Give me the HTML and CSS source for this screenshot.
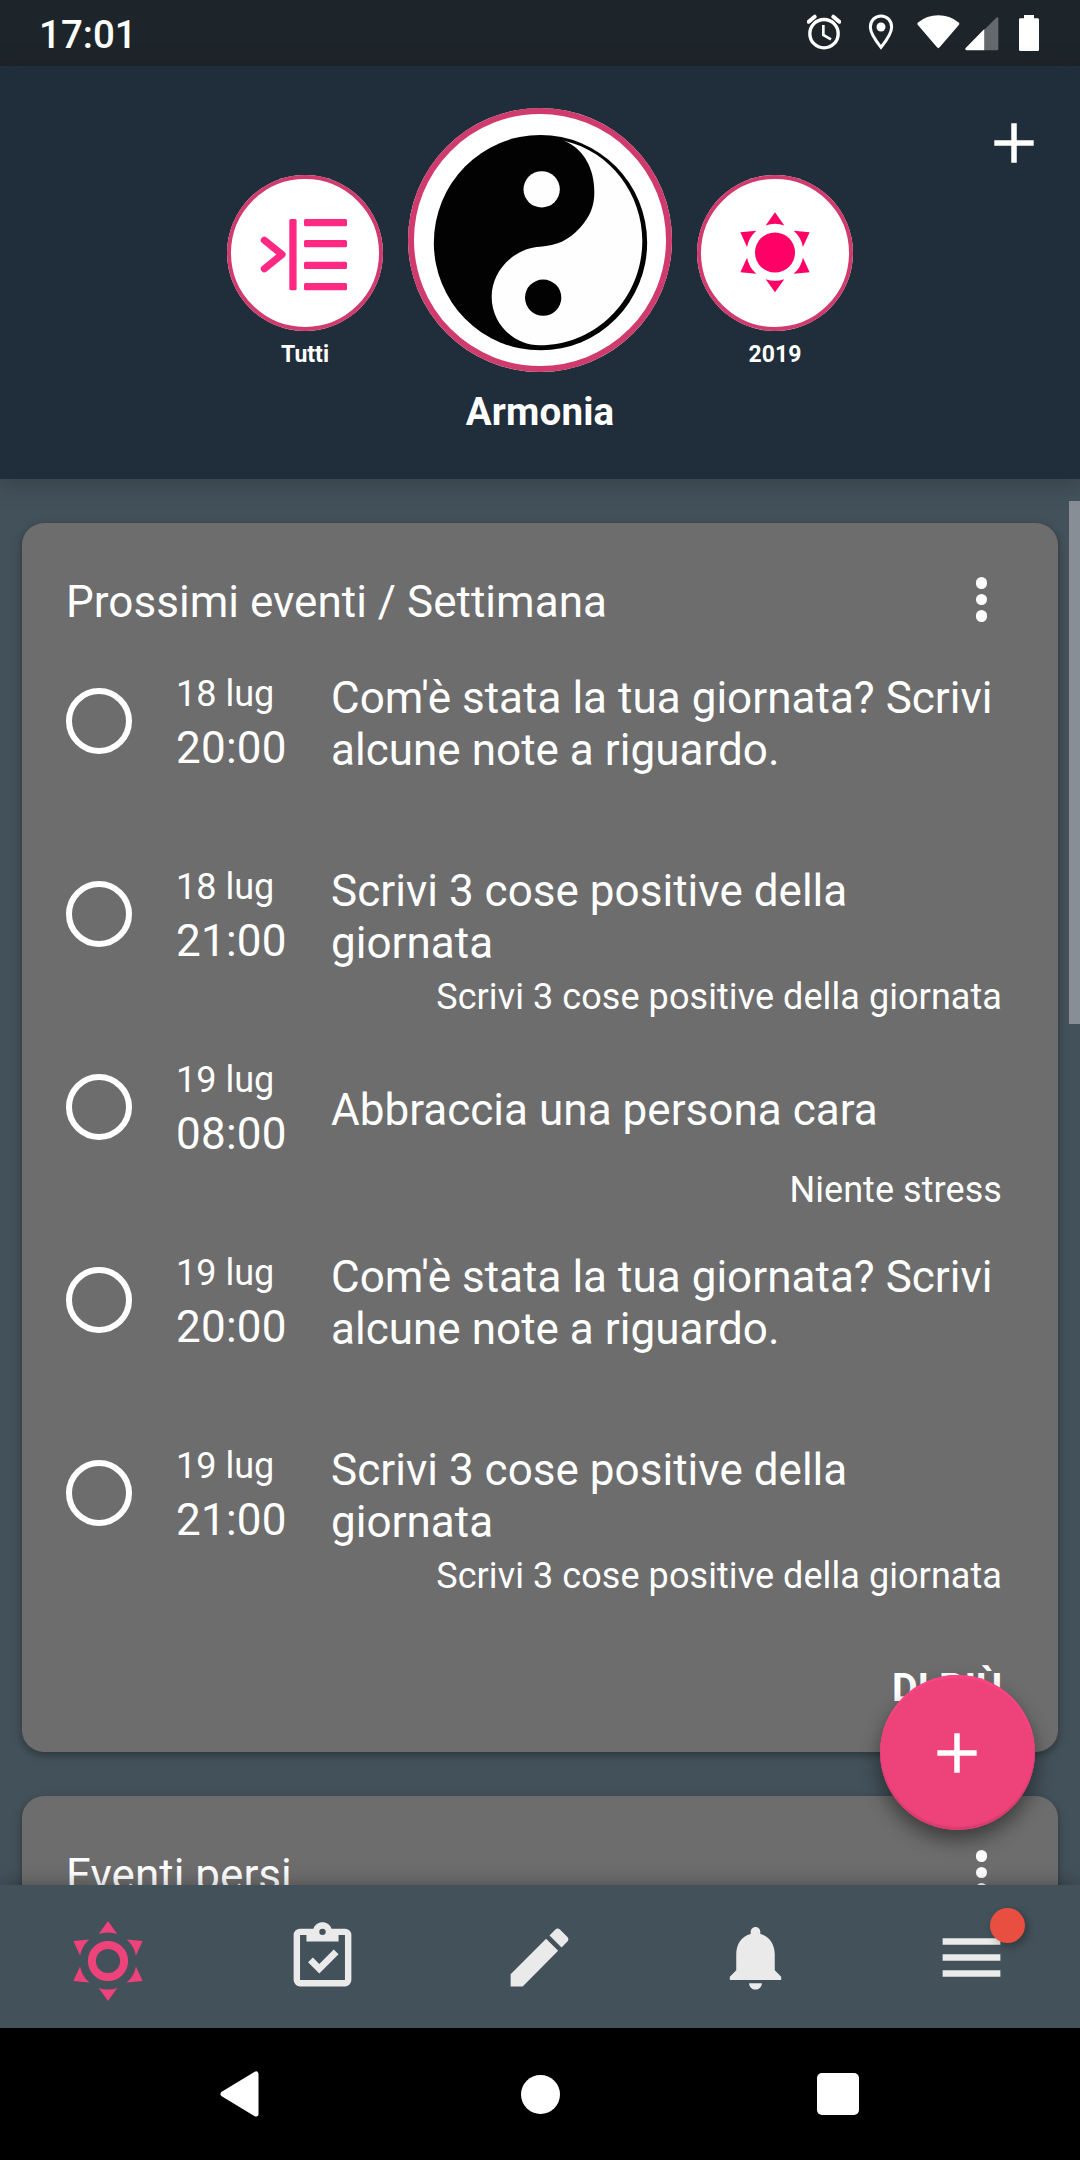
FILE: index.html
```html
<!DOCTYPE html>
<html lang="it">
<head>
    <meta charset="UTF-8">
    <meta name="viewport" content="width=device-width, initial-scale=1.0">
    <title>Armonia</title>
    <link rel="stylesheet" href="styles.css">
</head>
<body>
    <div class="app">
        <div class="status-bar">
            <span class="clock">17:01</span>
            <div class="status-icons">
                <svg class="icon-alarm" width="34" height="36" viewBox="80 43 102 108">
                    <circle cx="131" cy="102" r="42.5" fill="none" stroke="#fff" stroke-width="10"/>
                    <path d="M129 76v30l23 13" fill="none" stroke="#fff" stroke-width="8"/>
                    <path d="M85 66l18-15M177 66l-18-15" stroke="#fff" stroke-width="12" stroke-linecap="round"/>
                </svg>
                <svg class="icon-pin" width="26" height="36" viewBox="262 43 78 108">
                    <path d="M301 49c-18 0-32 14-32 33 0 20 16 41 32 61 16-20 32-41 32-61 0-19-14-33-32-33z" fill="none" stroke="#fff" stroke-width="9"/>
                    <circle cx="301" cy="82" r="13.5" fill="#fff"/>
                </svg>
                <svg class="icon-wifi" width="43" height="34" viewBox="409 45 129 102">
                    <path d="M411 68q28-22 62-22t62 22q2 3 0 6l-58 68q-4 5-8 0l-58-68q-2-3 0-6z" fill="#fff"/>
                </svg>
                <svg class="icon-signal" width="34" height="34" viewBox="554 50 102 102">
                    <path d="M612 88v62h39q3 0 3-4V54q-2-5-6-2z" fill="#63696d"/>
                    <path d="M612 86v64h-54q-5-2-2-7z" fill="#fff"/>
                </svg>
                <svg class="icon-battery" width="20" height="36" viewBox="717 45 60 108">
                    <path d="M732 45h30v10h11q4 0 4 4v90q0 4-4 4h-52q-4 0-4-4V59q0-4 4-4h11z" fill="#fff"/>
                </svg>
            </div>
        </div>

        <header class="header">
            <div class="profile profile-small">
                <div class="avatar">
                    <svg width="156" height="156" viewBox="227 175 156 156">
                        <g fill="#ff2883">
                            <rect x="289.3" y="219" width="7.3" height="71.3" rx="1.5"/>
                            <rect x="304" y="219" width="43" height="7.2" rx="1.5"/>
                            <rect x="304" y="240" width="43" height="7.2" rx="1.5"/>
                            <rect x="304" y="261.8" width="43" height="7.2" rx="1.5"/>
                            <rect x="304" y="283.1" width="43" height="7.2" rx="1.5"/>
                        </g>
                        <path d="M264.4 240.3l17.6 14.2-17.6 14.3" fill="none" stroke="#ff2883" stroke-width="7.2" stroke-linecap="round" stroke-linejoin="round"/>
                    </svg>
                </div>
                <span class="profile-name">Tutti</span>
            </div>
            <div class="profile profile-active">
                <div class="avatar">
                    <svg width="264" height="264" viewBox="54 54 792 792">
                        <ellipse cx="451.5" cy="458" rx="320" ry="323" fill="#020202"/>
                        <path d="M522 152C585 178 613 240 613 305C613 350 600 380 570 413C535 452 500 466 450 470C370 474 305 545 305 620C305 700 370 766 450 766C620 766 757 625 757 452C757 315 665 185 522 152z" fill="#fefefe"/>
                        <circle cx="455" cy="298" r="54.5" fill="#fefefe"/>
                        <circle cx="459.5" cy="623" r="54.5" fill="#020202"/>
                    </svg>
                </div>
                <span class="profile-name">Armonia</span>
            </div>
            <div class="profile profile-small">
                <div class="avatar">
                    <svg width="156" height="156" viewBox="-78 -78 156 156" fill="#ff0066">
                        <circle cy="-0.5" r="20"/>
                        <g transform="translate(0 -0.7)">
                            <path id="ray" d="M0-40L9.3-26.9A28.4 28.4 0 0 0-9.3-26.9z"/>
                            <use href="#ray" transform="rotate(60)"/>
                            <use href="#ray" transform="rotate(120)"/>
                            <use href="#ray" transform="rotate(180)"/>
                            <use href="#ray" transform="rotate(240)"/>
                            <use href="#ray" transform="rotate(300)"/>
                        </g>
                    </svg>
                </div>
                <span class="profile-name">2019</span>
            </div>
            <svg class="add-profile" width="40" height="40" viewBox="0 0 40 40">
                <path d="M20 .3v39.400M.3 20h39.400" stroke="#fff" stroke-width="5.5"/>
            </svg>
        </header>

        <main class="content">
            <section class="card">
                <div class="card-header">
                    <h2>Prossimi eventi / Settimana</h2>
                    <div class="dots"><i></i><i></i><i></i></div>
                </div>
                <ul class="events">
                    <li class="event">
                        <span class="check"></span>
                        <div class="when"><span class="date">18 lug</span><span class="time">20:00</span></div>
                        <div class="what">
                            <p class="event-title">Com'è stata la tua giornata? Scrivi alcune note a riguardo.</p>
                        </div>
                    </li>
                    <li class="event">
                        <span class="check"></span>
                        <div class="when"><span class="date">18 lug</span><span class="time">21:00</span></div>
                        <div class="what">
                            <p class="event-title">Scrivi 3 cose positive della giornata</p>
                            <p class="event-goal">Scrivi 3 cose positive della giornata</p>
                        </div>
                    </li>
                    <li class="event">
                        <span class="check"></span>
                        <div class="when"><span class="date">19 lug</span><span class="time">08:00</span></div>
                        <div class="what">
                            <p class="event-title">Abbraccia una persona cara</p>
                            <p class="event-goal">Niente stress</p>
                        </div>
                    </li>
                    <li class="event">
                        <span class="check"></span>
                        <div class="when"><span class="date">19 lug</span><span class="time">20:00</span></div>
                        <div class="what">
                            <p class="event-title">Com'è stata la tua giornata? Scrivi alcune note a riguardo.</p>
                        </div>
                    </li>
                    <li class="event">
                        <span class="check"></span>
                        <div class="when"><span class="date">19 lug</span><span class="time">21:00</span></div>
                        <div class="what">
                            <p class="event-title">Scrivi 3 cose positive della giornata</p>
                            <p class="event-goal">Scrivi 3 cose positive della giornata</p>
                        </div>
                    </li>
                </ul>
                <div class="more">DI PIÙ</div>
            </section>

            <section class="card">
                <div class="card-header">
                    <h2>Eventi persi</h2>
                    <div class="dots"><i></i><i></i><i></i></div>
                </div>
            </section>

            <div class="scrollbar"></div>
            <div class="fab">
                <svg width="40" height="40" viewBox="0 0 40 40">
                    <path d="M20 .3v39.400M.3 20h39.400" stroke="#fff" stroke-width="5.5"/>
                </svg>
            </div>
        </main>

        <nav class="tabs">
            <div class="tab tab-active">
                <svg width="80" height="80" viewBox="-40 -40 80 80">
                    <circle r="16.1" fill="none" stroke="currentColor" stroke-width="8"/>
                    <use href="#ray"/>
                    <use href="#ray" transform="rotate(60)"/>
                    <use href="#ray" transform="rotate(120)"/>
                    <use href="#ray" transform="rotate(180)"/>
                    <use href="#ray" transform="rotate(240)"/>
                    <use href="#ray" transform="rotate(300)"/>
                </svg>
            </div>
            <div class="tab">
                <svg viewBox="0 0 24 24"><path d="M19,3H14.82C14.4,1.84 13.3,1 12,1C10.7,1 9.6,1.84 9.18,3H5A2,2 0 0,0 3,5V19A2,2 0 0,0 5,21H19A2,2 0 0,0 21,19V5A2,2 0 0,0 19,3M12,3A1,1 0 0,1 13,4A1,1 0 0,1 12,5A1,1 0 0,1 11,4A1,1 0 0,1 12,3M7,7H17V5H19V19H5V5H7V7M7.5,13.5L9,12L11,14L15.5,9.5L17,11L11,17L7.5,13.5Z"/></svg>
            </div>
            <div class="tab">
                <svg viewBox="0 0 24 24"><path d="M20.71,7.04C21.1,6.65 21.1,6 20.71,5.63L18.37,3.29C18,2.9 17.35,2.9 16.96,3.29L15.12,5.12L18.87,8.87M3,17.25V21H6.75L17.81,9.93L14.06,6.18L3,17.25Z"/></svg>
            </div>
            <div class="tab">
                <svg viewBox="0 0 24 24"><path d="M12 22c1.1 0 2-.9 2-2h-4c0 1.1.89 2 2 2zm6-6v-5c0-3.07-1.64-5.64-4.5-6.32V4c0-.83-.67-1.5-1.5-1.5s-1.5.67-1.5 1.5v.68C7.63 5.36 6 7.92 6 11v5l-2 2v1h16v-1l-2-2z"/></svg>
            </div>
            <div class="tab">
                <svg viewBox="0 0 24 24"><path d="M3,6H21V8H3V6M3,11H21V13H3V11M3,16H21V18H3V16Z"/></svg>
                <span class="badge"></span>
            </div>
        </nav>

        <div class="system-bar">
            <svg class="sys-back" width="40" height="46" viewBox="0 0 40 46">
                <path d="M3 23L36 3v40z" fill="#fff" stroke="#fff" stroke-width="5" stroke-linejoin="round"/>
            </svg>
            <span class="sys-home"></span>
            <span class="sys-recent"></span>
        </div>
    </div>
</body>
</html>
```
FILE: styles.css
```css
* {
    box-sizing: border-box;
}
body {
    margin: 0;
    font-family: Roboto, sans-serif;
    color: #fff;
    background: #000;
}
h2, p, ul {
    margin: 0;
    padding: 0;
    font-weight: 400;
}
svg {
    display: block;
    flex: none;
}
.app {
    width: 1080px;
    height: 2160px;
    display: flex;
    flex-direction: column;
    overflow: hidden;
}

/* status bar */
.status-bar {
    height: 66px;
    flex: none;
    display: flex;
    justify-content: space-between;
    background: #1e252a;
    padding: 0 41px 0 39px;
}
.clock {
    font-size: 38.5px;
    font-weight: 500;
    line-height: 45px;
    margin-top: 12px;
}
.status-icons {
    display: flex;
    padding-top: 14px;
}
.icon-pin {
    margin-left: 27px;
}
.icon-wifi {
    margin: 1px 5px 0 23px;
}
.icon-signal {
    margin-top: 3px;
}
.icon-battery {
    margin: 1px 0 0 20px;
}

/* header */
.header {
    height: 413px;
    flex: none;
    display: flex;
    justify-content: center;
    gap: 25px;
    background: #202d3a;
    padding-top: 42px;
    position: relative;
    z-index: 2;
    box-shadow: 0 4px 24px rgba(0, 0, 0, 0.22);
}
.profile {
    display: flex;
    flex-direction: column;
    align-items: center;
    font-weight: 700;
}
.avatar {
    border-radius: 50%;
    background: #fff;
    position: relative;
}
.avatar::after {
    content: "";
    position: absolute;
    inset: 0;
    border-radius: 50%;
    border: 4px solid #d03b6d;
}
.profile-active .avatar::after {
    border-width: 6px;
}
.profile-small {
    padding-top: 67px;
}
.profile-small .profile-name {
    font-size: 23px;
    line-height: 27px;
    margin-top: 10px;
}
.profile-active .profile-name {
    font-size: 38.5px;
    line-height: 45px;
    margin-top: 17px;
    letter-spacing: 0.15px;
}
.add-profile {
    position: absolute;
    top: 57px;
    right: 46px;
}

/* content */
.content {
    height: 1406px;
    flex: none;
    position: relative;
    overflow: hidden;
    background: #43515a;
    padding: 44px 22px 0;
}
.card {
    background: #6d6d6d;
    border-radius: 22px;
    padding: 53px 56px 42px 44px;
    margin-bottom: 44px;
    box-shadow: 0 3px 8px rgba(0, 0, 0, 0.35);
}
.card-header {
    display: flex;
    justify-content: space-between;
}
.card-header h2 {
    font-size: 44px;
    line-height: 52px;
    letter-spacing: 0.03px;
}
.dots {
    display: flex;
    flex-direction: column;
    gap: 5px;
    padding: 1px 15px 0 0;
}
.dots i {
    width: 11.5px;
    height: 11.5px;
    border-radius: 50%;
    background: #fff;
}
.events {
    list-style: none;
    margin-top: 44px;
}
.event {
    display: flex;
    height: 193px;
}
.check {
    width: 66px;
    height: 66px;
    flex: none;
    border: 6px solid #fff;
    border-radius: 50%;
    margin-top: 16px;
}
.when {
    width: 155px;
    flex: none;
    margin-left: 44px;
    display: flex;
    flex-direction: column;
}
.date {
    font-size: 36px;
    line-height: 42px;
    margin: 1px 0 7px;
}
.time {
    font-size: 44px;
    line-height: 52px;
    letter-spacing: 0.25px;
}
.what {
    flex: 1;
}
.event-title {
    height: 104px;
    display: flex;
    align-items: center;
    font-size: 44px;
    line-height: 52px;
    letter-spacing: 0.03px;
}
.event-goal {
    font-size: 36px;
    line-height: 42px;
    margin-top: 7px;
    letter-spacing: 0.07px;
    text-align: right;
    white-space: nowrap;
}
.more {
    margin-top: 28px;
    font-size: 39.5px;
    font-weight: 700;
    line-height: 45px;
    text-align: right;
}
.scrollbar {
    position: absolute;
    top: 22px;
    right: 0;
    width: 11px;
    height: 523px;
    background: #878e95;
}
.fab {
    position: absolute;
    top: 1196px;
    right: 45px;
    width: 155px;
    height: 155px;
    border-radius: 50%;
    background: #ee427b;
    display: flex;
    align-items: center;
    justify-content: center;
    padding-right: 2px;
    box-shadow: inset 0 3px 1px #fb4582, inset 0 -3px 1px #d83d70, 0 10px 20px rgba(0, 0, 0, 0.45);
}

/* bottom tabs */
.tabs {
    height: 143px;
    flex: none;
    display: flex;
    background: #43515a;
    position: relative;
    z-index: 2;
    box-shadow: 0 0 18px rgba(0, 0, 0, 0.3);
}
.tab {
    flex: 1;
    display: flex;
    justify-content: center;
    padding: 34px 1px 0 0;
    position: relative;
}
.tab svg {
    width: 77px;
    height: 77px;
    fill: #eaeaea;
}
.tab-active {
    color: #ee427b;
    padding: 36px 0 0;
}
.tab-active svg {
    width: 80px;
    height: 80px;
    fill: currentColor;
}
.badge {
    position: absolute;
    top: 23px;
    left: 126px;
    width: 35px;
    height: 35px;
    border-radius: 50%;
    background: #e84f40;
    box-shadow: 3px 3px 8px rgba(0, 0, 0, 0.3);
}

/* android navigation */
.system-bar {
    height: 132px;
    display: flex;
    align-items: center;
    background: #000;
    padding-left: 220px;
}
.sys-home {
    width: 39px;
    height: 39px;
    border-radius: 50%;
    background: #fff;
    margin-left: 261px;
}
.sys-recent {
    width: 42px;
    height: 42px;
    border-radius: 5px;
    background: #fff;
    margin-left: 257px;
}
```
